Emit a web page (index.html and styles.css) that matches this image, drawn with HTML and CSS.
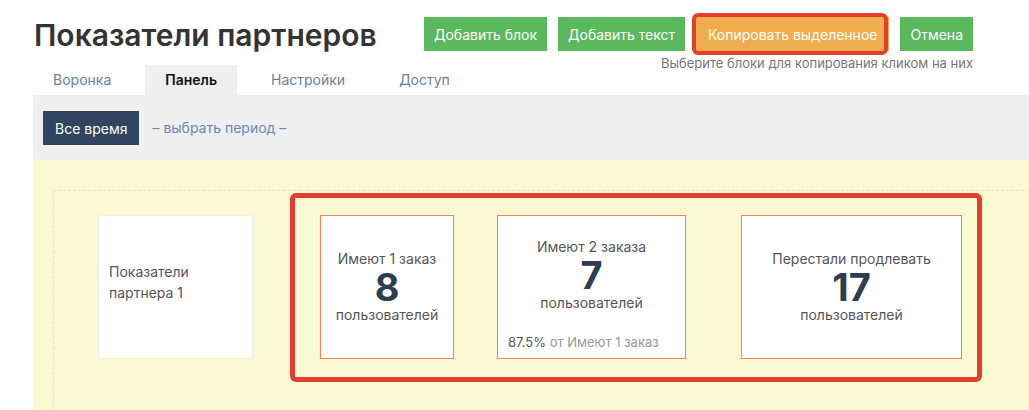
FILE: index.html
```html
<!DOCTYPE html>
<html lang="ru">
<head>
    <meta charset="UTF-8">
    <meta name="viewport" content="width=device-width, initial-scale=1.0">
    <title>Показатели партнеров</title>
    <link rel="stylesheet" href="styles.css">
</head>
<body>

    <div class="page">
        <div class="header">
            <h1>Показатели партнеров</h1>
            <div class="actions">
                <div class="btn-row">
                    <button class="btn btn-green">Добавить блок</button>
                    <button class="btn btn-green">Добавить текст</button>
                    <button class="btn btn-orange">Копировать выделенное</button>
                    <button class="btn btn-green">Отмена</button>
                </div>
                <p class="hint">Выберите блоки для копирования кликом на них</p>
            </div>
        </div>

        <!-- Вкладки -->
        <ul class="tabs">
            <li>Воронка</li>
            <li class="active">Панель</li>
            <li>Настройки</li>
            <li>Доступ</li>
        </ul>

        <div class="period-bar">
            <button class="btn btn-dark">Все время</button>
            <a class="period-link" href="#">– выбрать период –</a>
        </div>

        <div class="dashboard">
            <div class="canvas">
                <div class="card card-text">
                    <p>Показатели партнера 1</p>
                </div>
                <div class="card card-stat selected card-w1">
                    <div class="stat-main">
                        <div class="stat-label">Имеют 1 заказ</div>
                        <div class="stat-value">8</div>
                        <div class="stat-label">пользователей</div>
                    </div>
                </div>
                <div class="card card-stat selected card-w2">
                    <div class="stat-main">
                        <div class="stat-label">Имеют 2 заказа</div>
                        <div class="stat-value">7</div>
                        <div class="stat-label">пользователей</div>
                    </div>
                    <div class="stat-foot"><b>87.5%</b> от Имеют 1 заказ</div>
                </div>
                <div class="card card-stat selected card-w3">
                    <div class="stat-main">
                        <div class="stat-label">Перестали продлевать</div>
                        <div class="stat-value">17</div>
                        <div class="stat-label">пользователей</div>
                    </div>
                </div>
            </div>
        </div>
    </div>

    <!-- Выделение -->
    <div class="mark mark-button"></div>
    <div class="mark mark-cards"></div>

</body>
</html>
```

FILE: styles.css
```css
body {
    margin: 0;
    font-family: Inter, "Noto Sans", sans-serif;
    background-color: #fff;
    overflow: hidden;
    height: 410px;
}
.page {
    padding-left: 33px;
}
.header {
    width: 940px;
    display: flex;
    justify-content: space-between;
    padding-top: 17px;
}
h1 {
    margin: 0 0 0 1px;
    font-size: 30px;
    font-weight: 600;
    color: #333;
    line-height: 36px;
}
.actions {
    display: flex;
    flex-direction: column;
    align-items: flex-end;
}
.btn-row {
    display: flex;
    gap: 11px;
}
.btn {
    height: 34px;
    padding: 0 10px;
    border: none;
    border-radius: 0;
    font-family: inherit;
    font-size: 14px;
    color: white;
    cursor: pointer;
}
.btn-green {
    background-color: #5cb85c;
}
.btn-orange {
    background-color: #f0ad4e;
    padding: 0 12px;
}
.btn-dark {
    background-color: #2f4560;
    padding: 0 12px;
}
.hint {
    margin: 4px 0 0;
    font-size: 13px;
    color: #777;
    line-height: 16px;
}
.tabs {
    list-style: none;
    margin: -6px 0 0;
    padding: 0;
    display: flex;
    height: 30px;
}
.tabs li {
    padding: 0 20px;
    margin-right: 14px;
    line-height: 30px;
    font-size: 14px;
    color: #6b80a6;
}
.tabs li.active {
    background-color: #efefef;
    color: #111;
    font-weight: 600;
}
.period-bar {
    background-color: #efefef;
    height: 65px;
    padding: 16px 0 0 10px;
    box-sizing: border-box;
    display: flex;
    align-items: flex-start;
}
.period-link {
    margin-left: 13px;
    line-height: 34px;
    font-size: 14px;
    color: #6a88b8;
    text-decoration: none;
}
.dashboard {
    background-color: #fafad2;
    height: 250px;
    padding: 30px 0 0 20px;
    box-sizing: border-box;
}
.canvas {
    height: 100%;
    box-sizing: border-box;
    border-top: 1px dashed #e2e2d6;
    border-left: 1px dashed #e2e2d6;
    padding: 24px 0 0 44px;
    display: flex;
    align-items: flex-start;
}
.card {
    background-color: #fff;
    height: 144px;
    box-sizing: border-box;
    border: 1px solid #eee;
}
.card-text {
    width: 155px;
    display: flex;
    align-items: center;
    padding: 0 10px;
}
.card-text p {
    margin: 0 0 10px;
    font-size: 14px;
    line-height: 21px;
    color: #555;
}
.card-stat {
    display: flex;
    flex-direction: column;
    text-align: center;
}
.selected {
    border-color: #ff7f50;
}
.card-w1 {
    width: 134px;
    margin-left: 67px;
}
.card-w2 {
    width: 189px;
    margin-left: 43px;
}
.card-w3 {
    width: 221px;
    margin-left: 55px;
}
.stat-main {
    flex: 1;
    display: flex;
    flex-direction: column;
    justify-content: center;
}
.stat-label {
    font-size: 14px;
    line-height: 18px;
    color: #555;
}
.stat-value {
    font-size: 38px;
    font-weight: 700;
    line-height: 38px;
    color: #2c3e50;
}
.stat-foot {
    text-align: left;
    padding: 0 10px 8px;
    font-size: 13px;
    line-height: 16px;
    color: #999;
}
.stat-foot b {
    font-weight: normal;
    color: #555;
}
.mark {
    position: absolute;
    border: 5px solid #e53d30;
    border-radius: 6px;
    box-sizing: border-box;
}
.mark-button {
    left: 692px;
    top: 13px;
    width: 196px;
    height: 42px;
    border-width: 4px;
}
.mark-cards {
    left: 290px;
    top: 193px;
    width: 692px;
    height: 189px;
}
```
